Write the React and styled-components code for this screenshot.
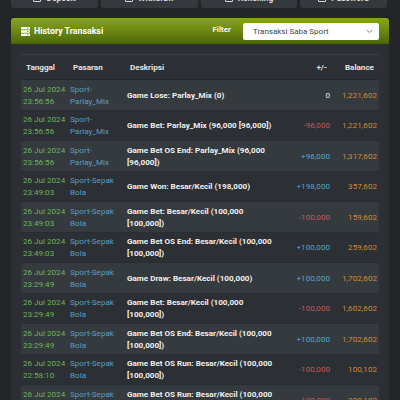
import React from 'react';
import styled, { createGlobalStyle } from 'styled-components';

const GlobalStyle = createGlobalStyle`
  html, body {
    margin: 0;
    padding: 0;
    background: #232529;
    font-family: Roboto, "Liberation Sans", sans-serif;
    overflow: hidden;
  }
`;

const Page = styled.div`
  padding: 0 11px;
`;

const ButtonBar = styled.div`
  display: grid;
  grid-template-columns: 87px 97px 96px 87px;
  gap: 3px;
  margin-top: -16px;
`;

const NavButton = styled.div`
  display: flex;
  align-items: center;
  justify-content: center;
  gap: 5px;
  height: 24px;
  box-sizing: border-box;
  padding-top: 4px;
  background: #35383d;
  border-radius: 3px;
  color: #d8d8d8;
  font-size: 8.5px;
  font-weight: 700;
`;

const NavIcon = styled.span`
  width: 6px;
  height: 6px;
  border: 1.5px solid #d8d8d8;
  border-radius: 1px;
`;

const Card = styled.div`
  margin-top: 10px;
  background: #2c2f33;
  border-radius: 3px 3px 0 0;
`;

const CardHeader = styled.div`
  display: flex;
  align-items: center;
  height: 26px;
  padding: 0 10px;
  border-radius: 3px 3px 0 0;
  background: linear-gradient(to bottom, #86a41d 0%, #6f8b12 45%, #55700b 85%, #4b6208 100%);
`;

const Title = styled.div`
  display: flex;
  align-items: center;
  gap: 4px;
  flex: 1;
  color: #ffffff;
  font-size: 8.8px;
  font-weight: 700;
`;

const FilterLabel = styled.div`
  color: #f2f2f2;
  font-size: 8px;
  font-weight: 700;
  margin-right: 12px;
  margin-top: -3px;
`;

const Select = styled.div`
  display: flex;
  align-items: center;
  justify-content: space-between;
  width: 136px;
  height: 17px;
  box-sizing: border-box;
  padding: 0 6px 0 10px;
  background: #ffffff;
  border-radius: 2px;
  color: #454545;
  font-size: 8px;
`;

const CardBody = styled.div`
  padding: 10px;
`;

const Table = styled.table`
  width: 100%;
  border-collapse: collapse;
  table-layout: fixed;
  border-top: 1px solid #3a3d42;
  font-size: 8.1px;
  line-height: 12px;
`;

const Th = styled.th`
  height: 24px;
  padding: 0 5px;
  color: #e6e6e6;
  font-weight: 700;
  text-align: ${(p) => (p.$right ? 'right' : 'left')};
  border-bottom: 1px solid #25272b;
`;

const Tr = styled.tr`
  background: ${(p) => (p.$odd ? '#353a3f' : '#2c2f33')};
  border-top: 1px solid #292c30;
`;

const Td = styled.td`
  padding: 2.75px 2px;
  vertical-align: middle;
  white-space: ${(p) => (p.$nowrap ? 'nowrap' : 'normal')};
  color: ${(p) => p.$color || '#f0f0f0'};
  font-weight: ${(p) => (p.$bold ? 700 : 400)};
  text-align: ${(p) => (p.$right ? 'right' : 'left')};
`;

const TitleIcon = () => (
  <svg width="9" height="9" viewBox="0 0 9 9">
    <rect x="0" y="0" width="9" height="2.4" rx="0.6" fill="#fff" />
    <rect x="0" y="3.3" width="9" height="2.4" rx="0.6" fill="#fff" />
    <rect x="0" y="6.6" width="9" height="2.4" rx="0.6" fill="#fff" />
    <rect x="6.2" y="0.7" width="1.2" height="1" fill="#6f8b12" />
    <rect x="6.2" y="4" width="1.2" height="1" fill="#6f8b12" />
    <rect x="6.2" y="7.3" width="1.2" height="1" fill="#6f8b12" />
  </svg>
);

const Chevron = () => (
  <svg width="7" height="5" viewBox="0 0 7 5">
    <path d="M0.8 1 L3.5 3.6 L6.2 1" stroke="#777" strokeWidth="0.9" fill="none" />
  </svg>
);

const PLAY = ['Sport-', 'Parlay_Mix'];
const BOLA = ['Sport-Sepak', 'Bola'];

const rows = [
  ['23:56:56', PLAY, 'Game Lose: Parlay_Mix (0)', '0', '1,221,602'],
  ['23:56:56', PLAY, 'Game Bet: Parlay_Mix (96,000 [96,000])', '-96,000', '1,221,602'],
  ['23:56:56', PLAY, 'Game Bet OS End: Parlay_Mix (96,000 [96,000])', '+96,000', '1,317,602'],
  ['23:49:03', BOLA, 'Game Won: Besar/Kecil (198,000)', '+198,000', '357,602'],
  ['23:49:03', BOLA, 'Game Bet: Besar/Kecil (100,000 [100,000])', '-100,000', '159,602'],
  ['23:49:03', BOLA, 'Game Bet OS End: Besar/Kecil (100,000 [100,000])', '+100,000', '259,602'],
  ['23:29:49', BOLA, 'Game Draw: Besar/Kecil (100,000)', '+100,000', '1,702,602'],
  ['23:29:49', BOLA, 'Game Bet: Besar/Kecil (100,000 [100,000])', '-100,000', '1,602,602'],
  ['23:29:49', BOLA, 'Game Bet OS End: Besar/Kecil (100,000 [100,000])', '+100,000', '1,702,602'],
  ['22:58:10', BOLA, 'Game Bet OS Run: Besar/Kecil (100,000 [100,000])', '-100,000', '100,102'],
  ['22:58:10', BOLA, 'Game Bet OS Run: Besar/Kecil (100,000 [100,000])', '-100,000', '200,102'],
];

const amountColor = (v) => {
  if (v.startsWith('-')) return '#c4585d';
  if (v.startsWith('+')) return '#4fa6cc';
  return '#e8e8e8';
};

export default function App() {
  return (
    <Page>
      <GlobalStyle />
      <ButtonBar>
        {['Deposit', 'Withdraw', 'Rekening', 'Password'].map((t) => (
          <NavButton key={t}>
            <NavIcon />
            {t}
          </NavButton>
        ))}
      </ButtonBar>
      <Card>
        <CardHeader>
          <Title>
            <TitleIcon />
            History Transaksi
          </Title>
          <FilterLabel>Filter</FilterLabel>
          <Select>
            Transaksi Saba Sport
            <Chevron />
          </Select>
        </CardHeader>
        <CardBody>
          <Table>
            <colgroup>
              <col style={{ width: 47 }} />
              <col style={{ width: 57 }} />
              <col style={{ width: 153 }} />
              <col style={{ width: 54 }} />
              <col style={{ width: 47 }} />
            </colgroup>
            <thead>
              <tr>
                <Th>Tanggal</Th>
                <Th>Pasaran</Th>
                <Th>Deskripsi</Th>
                <Th $right>+/-</Th>
                <Th $right>Balance</Th>
              </tr>
            </thead>
            <tbody>
              {rows.map(([time, market, desc, amount, balance], i) => (
                <Tr key={i} $odd={i % 2 === 0}>
                  <Td $nowrap $color="#6cb45a">
                    26 Jul 2024
                    <br />
                    {time}
                  </Td>
                  <Td $nowrap $color="#5a9ec3">
                    {market[0]}
                    <br />
                    {market[1]}
                  </Td>
                  <Td $bold>{desc}</Td>
                  <Td $right $color={amountColor(amount)}>{amount}</Td>
                  <Td $right $color="#d18a35">{balance}</Td>
                </Tr>
              ))}
            </tbody>
          </Table>
        </CardBody>
      </Card>
    </Page>
  );
}
